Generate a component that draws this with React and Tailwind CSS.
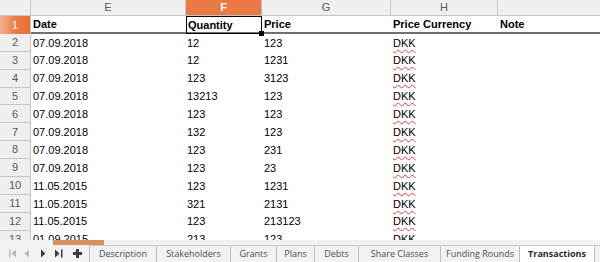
import React from "react";

const cols = [
  { key: "E", w: "w-[155px]" },
  { key: "F", w: "w-[76px]" },
  { key: "G", w: "w-[129px]" },
  { key: "H", w: "w-[107px]" },
];

const rows = [
  ["07.09.2018", "12", "123"],
  ["07.09.2018", "12", "1231"],
  ["07.09.2018", "123", "3123"],
  ["07.09.2018", "13213", "123"],
  ["07.09.2018", "123", "123"],
  ["07.09.2018", "132", "123"],
  ["07.09.2018", "123", "231"],
  ["07.09.2018", "123", "23"],
  ["11.05.2015", "123", "1231"],
  ["11.05.2015", "321", "2131"],
  ["11.05.2015", "123", "213123"],
  ["01.09.2015", "213", "123"],
];

const tabs = [
  { name: "Description", w: "w-[67px]" },
  { name: "Stakeholders", w: "w-[74px]" },
  { name: "Grants", w: "w-[46px]" },
  { name: "Plans", w: "w-[38px]" },
  { name: "Debts", w: "w-[44px]" },
  { name: "Share Classes", w: "w-[82px]" },
  { name: "Funding Rounds", w: "w-[79px]" },
];

const Nav = () => (
  <div className="flex items-center w-[89px] h-full pl-[9px]">
    {/* first */}
    <svg width="9" height="9" viewBox="0 0 9 9" className="mr-[6px]">
      <rect x="0" y="0.5" width="1.5" height="8" fill="#b9b9b9" />
      <path d="M7 0.5 L2.5 4.5 L7 8.5 Z" fill="#b9b9b9" />
    </svg>
    {/* prev */}
    <svg width="6" height="9" viewBox="0 0 6 9" className="mr-[10px]">
      <path d="M5 0.5 L0.5 4.5 L5 8.5 Z" fill="#b9b9b9" />
    </svg>
    {/* next */}
    <svg width="6" height="9" viewBox="0 0 6 9" className="mr-[8px]">
      <path d="M1 0.5 L5.5 4.5 L1 8.5 Z" fill="#3c3c3c" />
    </svg>
    {/* last */}
    <svg width="9" height="9" viewBox="0 0 9 9" className="mr-[10px]">
      <path d="M1 0.5 L5.5 4.5 L1 8.5 Z" fill="#3c3c3c" />
      <rect x="7" y="0.5" width="1.5" height="8" fill="#3c3c3c" />
    </svg>
    {/* add sheet */}
    <svg width="9" height="9" viewBox="0 0 9 9">
      <rect x="3" y="0" width="3" height="9" fill="#3c3c3c" />
      <rect x="0" y="3" width="9" height="3" fill="#3c3c3c" />
    </svg>
  </div>
);

export default function App() {
  return (
    <div className="w-[600px] h-[262px] overflow-hidden bg-white font-['Liberation_Sans',Arial,sans-serif] text-[11px] text-black">
      <div className="h-[240px] overflow-hidden">
        {/* column headers */}
        <div className="flex h-[16px] bg-[#efefef] border-b border-[#c4c4c4] text-[#5a5a5a] text-[11px]">
          <div className="w-[31px] shrink-0 border-r border-[#c4c4c4]" />
          {cols.map((c) => (
            <div
              key={c.key}
              className={`${c.w} shrink-0 flex items-center justify-center border-r border-[#c4c4c4] ${
                c.key === "F" ? "bg-[#ea7a44] text-white font-bold" : ""
              }`}
            >
              {c.key}
            </div>
          ))}
          <div className="flex-1" />
        </div>

        {/* row 1 */}
        <div className="flex h-[17.9px]">
          <div className="w-[31px] shrink-0 flex items-center justify-center bg-gradient-to-r from-[#f3ae92] via-[#ec7c48] to-[#e86f36] text-white border-r border-[#c4c4c4]">
            1
          </div>
          <div className="flex flex-1 border-b-2 border-[#6f6f6f] font-bold">
            <div className="w-[155px] shrink-0 flex items-center pl-[2px]">Date</div>
            <div className="relative w-[76px] shrink-0 flex items-center pl-[1px] border border-black -mb-[2px]">
              Quantity
              <div className="absolute -right-[3px] -bottom-[3px] w-[5px] h-[5px] bg-black" />
            </div>
            <div className="w-[129px] shrink-0 flex items-center pl-[2px]">Price</div>
            <div className="w-[107px] shrink-0 flex items-center pl-[2px]">Price Currency</div>
            <div className="flex-1 flex items-center pl-[2px]">Note</div>
          </div>
        </div>

        {rows.map((r, i) => (
          <div key={i} className="flex h-[17.9px]">
            <div className="w-[31px] shrink-0 flex items-center justify-center bg-[#efefef] border-r border-b border-[#c4c4c4] text-[#5a5a5a]">
              {i + 2}
            </div>
            <div className="w-[155px] shrink-0 flex items-center pl-[2px]">{r[0]}</div>
            <div className="w-[76px] shrink-0 flex items-center pl-[1px]">{r[1]}</div>
            <div className="w-[129px] shrink-0 flex items-center pl-[2px]">{r[2]}</div>
            <div className="w-[107px] shrink-0 flex items-center pl-[2px]">
              <span className="underline decoration-wavy decoration-[#e04040] decoration-1 underline-offset-2">
                DKK
              </span>
            </div>
            <div className="flex-1" />
          </div>
        ))}
      </div>

      {/* bottom bar: scroll strip + sheet tabs */}
      <div className="h-[22px] bg-[#f2f2f2] flex flex-col">
        <div className="h-[5px] shrink-0 pl-[53px]">
          <div className="w-[51px] h-[5px] bg-[#d8915c]" />
        </div>
        <div className="flex flex-1 font-['Open_Sans','DejaVu_Sans',sans-serif] text-[9px] text-[#4d4d4d]">
          <Nav />
          <div className="flex flex-1 border-t border-[#c9c9c9]">
            {tabs.map((t) => (
              <div
                key={t.name}
                className={`${t.w} shrink-0 flex items-center justify-center border-l border-[#bdbdbd]`}
              >
                {t.name}
              </div>
            ))}
            <div className="w-[76px] shrink-0 flex items-center justify-center border-l border-r border-[#bdbdbd] bg-white font-bold text-[#2a2a2a]">
              Transactions
            </div>
            <div className="flex-1" />
          </div>
        </div>
      </div>
    </div>
  );
}
